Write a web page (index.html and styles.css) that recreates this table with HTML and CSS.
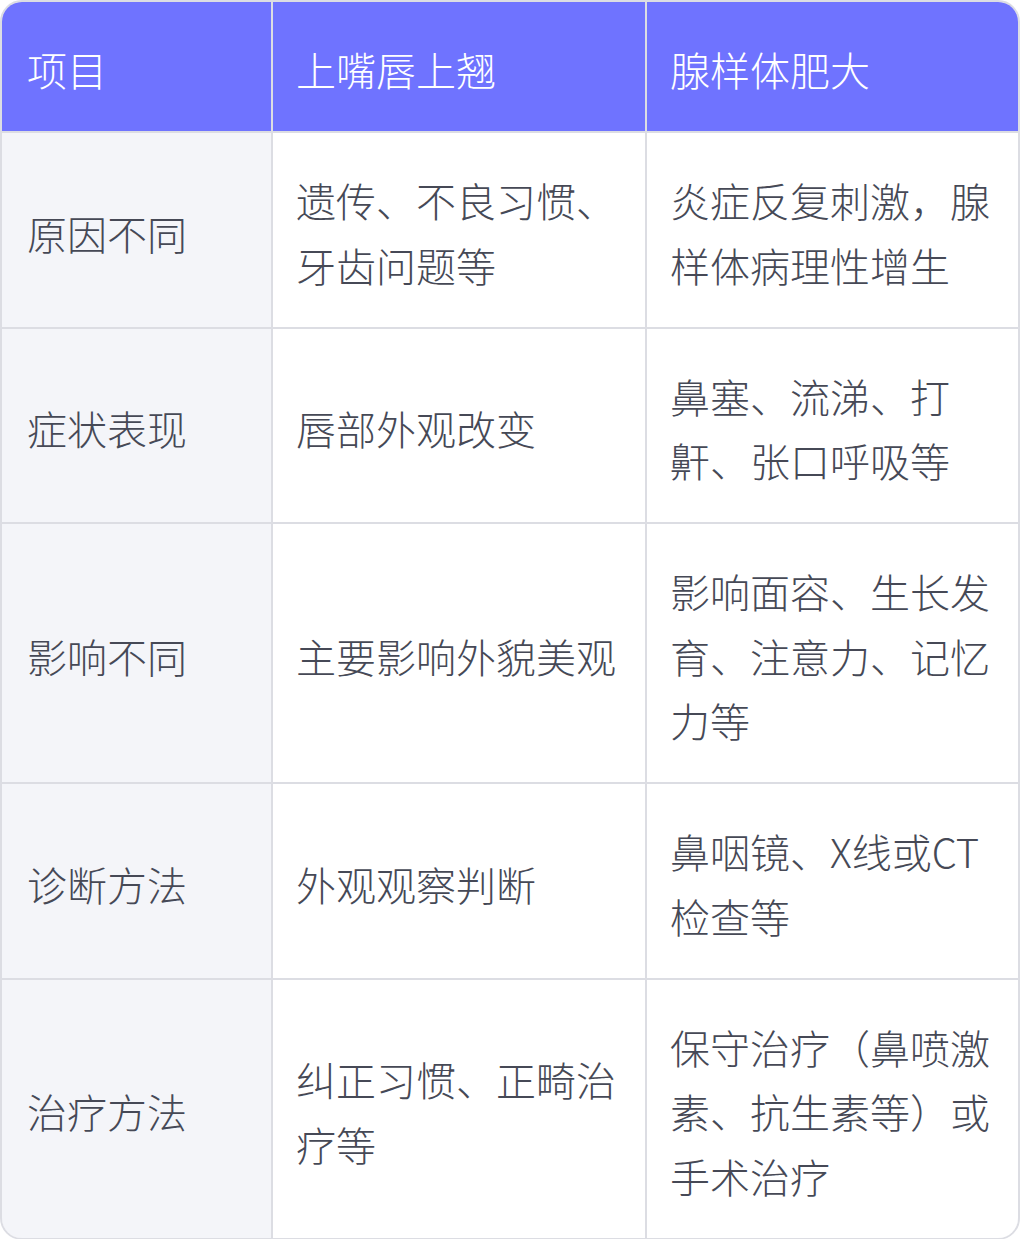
FILE: index.html
```html
<!DOCTYPE html>
<html lang="zh-CN">
<head>
<meta charset="utf-8">
<title>上嘴唇上翘 vs 腺样体肥大</title>
<link rel="stylesheet" href="styles.css">
</head>
<body>
<div class="table-wrap">
  <div class="grid">
    <div class="cell head label-col">项目</div>
    <div class="cell head">上嘴唇上翘</div>
    <div class="cell head">腺样体肥大</div>

    <div class="cell label label-col">原因不同</div>
    <div class="cell">遗传、不良习惯、牙齿问题等</div>
    <div class="cell">炎症反复刺激，腺样体病理性增生</div>

    <div class="cell label label-col">症状表现</div>
    <div class="cell">唇部外观改变</div>
    <div class="cell">鼻塞、流涕、打鼾、张口呼吸等</div>

    <div class="cell label label-col">影响不同</div>
    <div class="cell">主要影响外貌美观</div>
    <div class="cell">影响面容、生长发育、注意力、记忆力等</div>

    <div class="cell label label-col">诊断方法</div>
    <div class="cell">外观观察判断</div>
    <div class="cell">鼻咽镜、X线或CT检查等</div>

    <div class="cell label label-col">治疗方法</div>
    <div class="cell">纠正习惯、正畸治疗等</div>
    <div class="cell">保守治疗（鼻喷激素、抗生素等）或手术治疗</div>
  </div>
</div>
</body>
</html>
```

FILE: styles.css
```css
html, body {
  margin: 0;
  padding: 0;
  background: #ffffff;
}

body {
  font-family: "Noto Sans CJK SC", "Noto Sans", sans-serif;
}

.table-wrap {
  width: 1020px;
  box-sizing: border-box;
  border: 2px solid #dcdde3;
  border-radius: 22px;
  overflow: hidden;
}

.grid {
  display: grid;
  grid-template-columns: 269px 372px 371px;
  gap: 2px;
  background: #dcdde3;
}

.cell {
  display: flex;
  align-items: center;
  padding: 35.25px 22px 29.25px 23px;
  font-size: 40px;
  font-weight: 300;
  line-height: 64.5px;
  color: #464956;
  background: #ffffff;
  word-break: break-all;
}

.cell.label-col {
  padding-left: 25px;
}

.cell.head {
  background: #6f73ff;
  color: #ffffff;
}

.cell.label {
  background: #f4f5f9;
}
```
